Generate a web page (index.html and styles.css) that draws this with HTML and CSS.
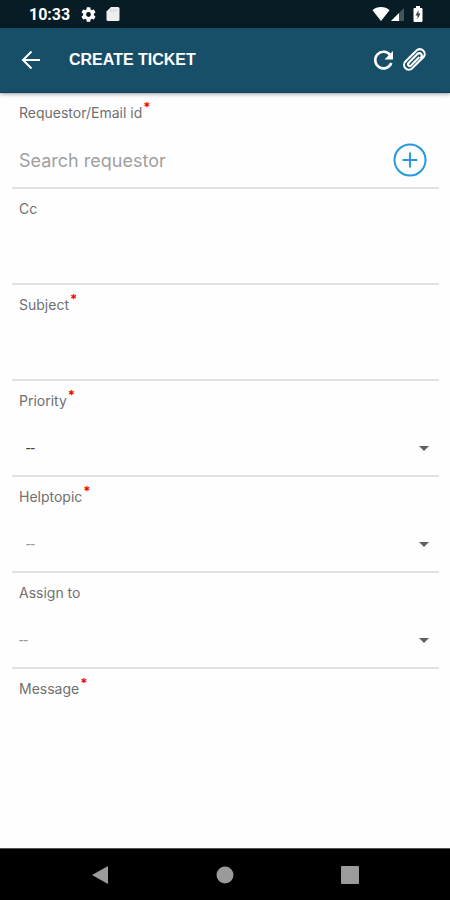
FILE: index.html
```
<!DOCTYPE html>
<html lang="en">
<head>
    <meta charset="UTF-8">
    <meta name="viewport" content="width=device-width, initial-scale=1.0">
    <title>Create Ticket</title>
    <link rel="stylesheet" href="styles.css">
</head>
<body>

    <div class="status-bar">
        <span class="clock">10:33</span>
        <svg class="gear" width="15" height="15" viewBox="2 2 20 20" fill="#fff"><path d="M19.14 12.94c.04-.3.06-.61.06-.94s-.02-.64-.07-.94l2.03-1.58a.49.49 0 0 0 .12-.61l-1.92-3.32a.49.49 0 0 0-.59-.22l-2.39.96a7 7 0 0 0-1.62-.94l-.36-2.54a.48.48 0 0 0-.48-.41h-3.84a.48.48 0 0 0-.47.41l-.36 2.54a7 7 0 0 0-1.62.94l-2.39-.96a.48.48 0 0 0-.59.22L2.74 8.87a.48.48 0 0 0 .12.61l2.03 1.58a6 6 0 0 0 0 1.88l-2.03 1.58a.49.49 0 0 0-.12.61l1.92 3.32c.12.22.37.29.59.22l2.39-.96c.5.38 1.03.7 1.62.94l.36 2.54c.05.24.24.41.48.41h3.84c.24 0 .44-.17.47-.41l.36-2.54a7 7 0 0 0 1.62-.94l2.39.96c.22.08.47 0 .59-.22l1.92-3.32a.48.48 0 0 0-.12-.61zM12 15.2a3.2 3.2 0 1 1 0-6.4 3.2 3.2 0 0 1 0 6.4z"/></svg>
        <svg class="card" width="14" height="16" viewBox="0 0 14 16"><path d="M5 1h7a1.500 1.500 0 0 1 1.500 1.500v11A1.500 1.500 0 0 1 12 15H2A1.500 1.500 0 0 1 .5 13.500v-8z" fill="#eee"/><path d="M5 3v3M7.500 3v3M10 3v3" stroke="#c8cccf"/></svg>
        <span class="status-right">
            <svg width="18" height="16" viewBox="0 0 18 16" fill="#fff"><path d="M9 15 .5 4.200C2.800 2 5.700 1 9 1s6.200 1 8.500 3.200z"/></svg>
            <svg width="15" height="16" viewBox="0 0 15 16"><path d="M14 2v13H1z" fill="#43545b"/><path d="M9 7v8H1z" fill="#fff"/></svg>
            <svg class="battery" width="10" height="16" viewBox="0 0 10 16"><path d="M3 0h4v2h1.500a1 1 0 0 1 1 1v12a1 1 0 0 1-1 1h-7a1 1 0 0 1-1-1V3a1 1 0 0 1 1-1H3z" fill="#fff"/><path d="M5.500 4 2.500 9.500h2V13l3-5.500h-2z" fill="#33434a"/></svg>
        </span>
    </div>

    <header class="app-bar">
        <button class="icon-btn" type="button" aria-label="Back">
            <svg width="20" height="20" viewBox="0 0 20 20" fill="none" stroke="#fff" stroke-width="2"><path d="M19 10H2.500M10.500 1.500 2 10l8.500 8.500"/></svg>
        </button>
        <h1>CREATE TICKET</h1>
        <button class="icon-btn" type="button" aria-label="Refresh">
            <svg width="21" height="21" viewBox="0 0 21 21"><path d="M17.300 5.200A8.300 8.300 0 1 0 18.300 13" fill="none" stroke="#fff" stroke-width="2.600"/><path d="M20 1v8.500h-8.500z" fill="#fff"/></svg>
        </button>
        <button class="icon-btn attach" type="button" aria-label="Attach file">
            <svg width="26" height="26" viewBox="1 0 25 25" fill="none" stroke="#fff" stroke-width="2" stroke-linecap="round"><path d="M19.500 11.500 11 20.300a4.500 4.500 0 0 1-7-.3 4.500 4.500 0 0 1 .3-6L14.500 3.800a4.500 4.500 0 0 1 6.800-.4c2.100 2 1.900 4.700.3 6.400M21.500 9.800l-9.700 9.700M17 10.300l-7.300 7.500c-1.700 1.600-4-.6-2.400-2.400l8.500-8.700c1.100-1.100 2.700-1 3.600 0 .9 1 .8 2.400-.2 3.500"/></svg>
        </button>
    </header>

    <form class="ticket-form">
        <div class="field">
            <label for="requestor">Requestor/Email id<sup>*</sup></label>
            <div class="control">
                <input id="requestor" type="text" placeholder="Search requestor">
                <button class="add-btn" type="button" aria-label="Add requestor">
                    <svg width="34" height="34" viewBox="0 0 34 34" fill="none" stroke="#2699e0" stroke-width="2"><circle cx="17" cy="17" r="15.500"/><path d="M17 9.500v15M9.500 17h15"/></svg>
                </button>
            </div>
        </div>
        <div class="field">
            <label for="cc">Cc</label>
            <div class="control"><input id="cc" type="text"></div>
        </div>
        <div class="field">
            <label for="subject">Subject<sup>*</sup></label>
            <div class="control"><input id="subject" type="text"></div>
        </div>
        <div class="field">
            <label for="priority">Priority<sup>*</sup></label>
            <div class="control select">
                <select id="priority" class="inset dark"><option>--</option></select>
            </div>
        </div>
        <div class="field">
            <label for="helptopic">Helptopic<sup>*</sup></label>
            <div class="control select">
                <select id="helptopic" class="inset"><option>--</option></select>
            </div>
        </div>
        <div class="field">
            <label for="assign">Assign to</label>
            <div class="control select">
                <select id="assign"><option>--</option></select>
            </div>
        </div>
        <div class="field message">
            <label for="message">Message<sup>*</sup></label>
            <textarea id="message"></textarea>
        </div>
    </form>

    <nav class="nav-bar">
        <button type="button" aria-label="Back"><svg width="18" height="18" viewBox="0 0 18 18" fill="#9b9b9b"><path d="M17 0v18L1 9z"/></svg></button>
        <button type="button" aria-label="Home"><svg width="18" height="18" viewBox="0 0 18 18" fill="#9b9b9b"><circle cx="9" cy="9" r="8.500"/></svg></button>
        <button type="button" aria-label="Recent apps"><svg width="18" height="18" viewBox="0 0 18 18" fill="#9b9b9b"><rect width="18" height="18" rx="1"/></svg></button>
    </nav>

</body>
</html>
```
FILE: styles.css
```
* { margin: 0; padding: 0; box-sizing: border-box; }
body {
    display: flex;
    flex-direction: column;
    min-height: 100vh;
    background: #fefefe;
    font-family: Inter, "Work Sans", sans-serif;
}
svg { display: block; }
button { background: none; border: none; cursor: pointer; }

.status-bar {
    display: flex;
    align-items: center;
    height: 28px;
    padding: 0 27px 0 29px;
    background: #081c25;
    color: #fff;
}
.clock { font: bold 16px Roboto, sans-serif; }
.gear { margin-left: 11px; }
.card { margin-left: 10px; }
.status-right { display: flex; margin-left: auto; }
.battery { margin-left: 8px; }

.app-bar {
    position: relative;
    display: flex;
    align-items: center;
    height: 65px;
    padding: 0 22px 0 21px;
    background: #174e68;
    border-bottom: 1px solid #103f56;
    box-shadow: 0 1px 4px rgba(0, 0, 0, 0.4);
}
.app-bar h1 {
    flex: 1;
    margin-left: 28px;
    color: #fff;
    font: bold 16px "Liberation Sans", Arial, sans-serif;
}
.attach { margin-left: 8px; }

.ticket-form { flex: 1; display: flex; flex-direction: column; padding: 0 11px 0 12px; }
.field { padding: 10px 8px 0 7px; border-bottom: 2px solid #e2e2e2; }
.field label { display: block; color: #707070; font-size: 14px; line-height: 20px; }
.field sup { margin-left: 1px; color: #f00; font-size: 13px; font-weight: bold; line-height: 0; }
.control { display: flex; align-items: center; height: 54px; margin-top: 10px; }
.control input,
.control select,
.message textarea {
    width: 100%;
    min-width: 0;
    height: 100%;
    border: none;
    outline: none;
    background: transparent;
    color: #555;
    font: 18px Inter, "Work Sans", sans-serif;
}
.control input::placeholder { color: #a0a0a0; }
.add-btn { margin-right: 4px; }

.control.select { position: relative; }
.control.select::after {
    content: "";
    position: absolute;
    right: 2px;
    border: 5px solid transparent;
    border-top-color: #606060;
    border-bottom: none;
    pointer-events: none;
}
.control select { appearance: none; color: #999; font: 16px Roboto, sans-serif; }
.control select.inset { padding-left: 7px; }
.control select.dark { color: #444; }

.message { flex: 1; border-bottom: none; }
.message textarea { height: 96px; resize: none; }

.nav-bar {
    display: flex;
    justify-content: space-around;
    align-items: center;
    height: 52px;
    padding: 0 38px;
    background: #000;
    border-top: 1px solid #555;
}
```
